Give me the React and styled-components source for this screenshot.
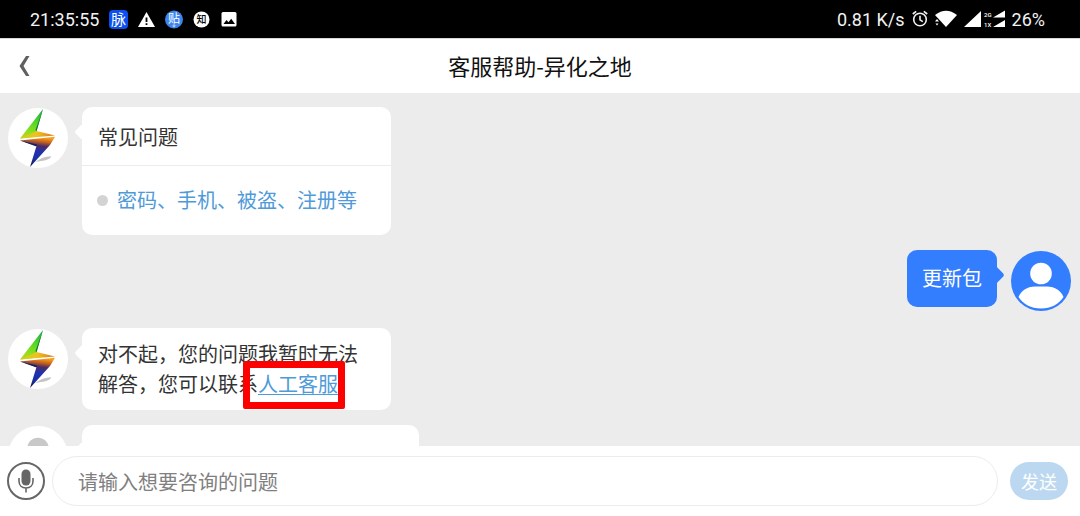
import React, { useState } from 'react'
import styled, { createGlobalStyle } from 'styled-components';

const GlobalStyle = createGlobalStyle`
  * {
    box-sizing: border-box;
  }
  body {
    margin: 0;
    font-family: "Noto Sans CJK SC", "Noto Sans", sans-serif;
    color: #333;
  }
`;
const Page = styled.div`
  display: flex;
  flex-direction: column;
  height: 100vh;
  background-color: #ececec;
`;
const StatusBar = styled.div`
  display: flex;
  justify-content: space-between;
  align-items: center;
  height: 38px;
  padding: 0 35px 0 30px;
  background-color: #000;
  color: #f2f2f2;
  font-family: Roboto, sans-serif;
  font-size: 18px;
`;
const StatusGroup = styled.div`
  display: flex;
  align-items: center;
  gap: ${(props) => props.$gap}px;

  svg {
    display: block;
    overflow: visible;
  }
`;
const Header = styled.header`
  display: grid;
  grid-template-columns: 50px 1fr 50px;
  align-items: center;
  height: 55px;
  background-color: #fff;
  border-top: 1px solid #d8d8d8;
`;
const BackButton = styled.button`
  display: flex;
  align-items: center;
  height: 54px;
  padding: 0 0 0 19px;
  border: none;
  background: none;
`;
const Title = styled.h1`
  margin: 0;
  padding-bottom: 2px;
  font-size: 22px;
  line-height: 52px;
  font-weight: 400;
  color: #111;
  text-align: center;
`;
const Chat = styled.main`
  flex: 1;
  min-height: 0;
  overflow: hidden;
  display: flex;
  flex-direction: column;
  gap: 15px;
  padding: 14px 9px 0 8px;
`;
const Message = styled.div`
  display: flex;
  flex-shrink: 0;
  flex-direction: ${(props) => (props.$mine ? 'row-reverse' : 'row')};
  align-items: flex-start;
  gap: 14px;
`;
const Avatar = styled.div`
  width: 60px;
  height: 60px;
  margin: 1px 0 2px;
  border-radius: 50%;
  background-color: ${(props) => (props.$mine ? '#337dff' : '#fff')};

  svg {
    display: block;
  }
`;
const Bubble = styled.div`
  position: relative;
  width: ${(props) => props.$width || 'auto'};
  min-height: 57px;
  border-radius: 10px;
  background-color: ${(props) => (props.$mine ? '#337dff' : '#fff')};
  color: ${(props) => (props.$mine ? '#fff' : '#333')};
  font-size: 20px;
  line-height: 30px;

  &::before {
    content: "";
    position: absolute;
    top: 18px;
    ${(props) => (props.$mine ? 'right' : 'left')}: -5px;
    width: 14px;
    height: 14px;
    border-radius: 3px;
    background-color: inherit;
    transform: rotate(45deg);
  }
`;
const BubbleText = styled.p`
  margin: 0;
  padding: ${(props) => (props.$mine ? '13px 15px 14px' : '11px 16px')};
`;
const BubbleTitle = styled.h2`
  margin: 0;
  padding: 15px 16px 13px;
  border-bottom: 1px solid #ececec;
  font-size: 20px;
  font-weight: 400;
`;
const TopicList = styled.ul`
  margin: 0;
  padding: 19px 15px 20px;
  list-style: none;
`;
const Topic = styled.li`
  display: flex;
  align-items: center;
  gap: 9px;

  &::before {
    content: "";
    width: 11px;
    height: 11px;
    border-radius: 50%;
    background-color: #d3d3d3;
  }
`;
const Link = styled.a`
  color: #4f9ad8;
  text-decoration: ${(props) => (props.$underline ? 'underline' : 'none')};
  text-decoration-thickness: 1px;
  text-underline-offset: 2px;
`;
const Marked = styled.span`
  position: relative;
  display: inline-block;

  &::after {
    content: "";
    position: absolute;
    inset: -8px -7px -10px -15px;
    border: 7px solid #fe0000;
    border-radius: 2px;
    pointer-events: none;
  }
`;
const Composer = styled.form`
  display: flex;
  align-items: center;
  padding: 10px 12px 10px 7px;
  background-color: #fff;
`;
const MicButton = styled.button`
  width: 38px;
  height: 38px;
  padding: 0;
  border: 2px solid #666;
  border-radius: 50%;
  background: none;

  svg {
    display: block;
  }
`;
const Input = styled.input`
  flex: 1;
  min-width: 0;
  height: 50px;
  margin: 0 12px 0 7px;
  padding: 0 25px;
  border: 1px solid #ececec;
  border-radius: 25px;
  outline: none;
  background-color: #fff;
  font-family: inherit;
  font-size: 20px;
  color: #333;

  &::placeholder {
    color: #808080;
  }
`;
const SendButton = styled.button`
  width: 58px;
  height: 38px;
  padding: 0;
  border: none;
  border-radius: 19px;
  background-color: #bcd8f1;
  color: #fff;
  font-family: inherit;
  font-size: 18px;
`;

const BoltIcon = () => (
    <svg width="60" height="60" viewBox="0 0 60 60" aria-hidden="true">
        <defs>
            <linearGradient id="boltTop" x1="0.7" y1="0" x2="0.4" y2="1">
                <stop offset="0" stopColor="#1fae4a" />
                <stop offset="0.4" stopColor="#4fd626" />
                <stop offset="0.8" stopColor="#8fe01c" />
                <stop offset="1" stopColor="#c9cc1c" />
            </linearGradient>
            <linearGradient id="boltEdge" x1="0" y1="0" x2="1" y2="0">
                <stop offset="0" stopColor="#b9dc1c" />
                <stop offset="0.5" stopColor="#f0c020" />
                <stop offset="1" stopColor="#d8741c" />
            </linearGradient>
            <linearGradient id="boltBottom" x1="0.5" y1="0" x2="0.35" y2="1">
                <stop offset="0" stopColor="#f5a01c" />
                <stop offset="0.14" stopColor="#c8621c" />
                <stop offset="0.28" stopColor="#4c2c62" />
                <stop offset="0.5" stopColor="#1c32b4" />
                <stop offset="0.75" stopColor="#1a2f9c" />
                <stop offset="1" stopColor="#0a1450" />
            </linearGradient>
        </defs>
        <path d="M27 54 L34 50 Q44 47 43 49 Q41 52 33 53 Z" fill="#c4c4c4" />
        <path d="M35 1 L12 30.500 L30 28.500 L28.500 23 Z" fill="url(#boltTop)" />
        <path d="M35 1 L28.500 23.500 L27.500 22 Z" fill="#12752c" />
        <path d="M12 30.500 L26 24 L28.500 23 L47 27.500 Z" fill="url(#boltEdge)" />
        <path d="M12 32.500 L47 28.800 L42 37 L22 59 L28.500 38 Z" fill="url(#boltBottom)" />
        <path d="M12 32.500 L29 36.500 L28.500 38.500 Z" fill="#15205f" />
    </svg>
)

const PersonIcon = ({ color }) => (
    <svg width="60" height="60" viewBox="0 0 60 60" aria-hidden="true" fill={color}>
        <circle cx="30" cy="22.500" r="10.800" />
        <path d="M24 35.500 H36 C44 35.500 50 40 52.500 46 C48 53 40 57.500 30 57.500 C20 57.500 12 53 7.500 46 C10 40 16 35.500 24 35.500 Z" />
    </svg>
)

const iconFont = '"Noto Sans CJK SC", sans-serif';

const StatusLeft = () => (
    <StatusGroup $gap={10}>
        <span>21:35:55</span>
        <svg width="19" height="19" viewBox="0 0 19 19">
            <rect width="19" height="19" rx="4" fill="#0b50ee" />
            <text x="9.500" y="15" textAnchor="middle" fontFamily={iconFont} fontSize="15" fill="#fff">脉</text>
        </svg>
        <svg width="17" height="19" viewBox="0 0 17 19">
            <path d="M8.500 2 L17 17 H0 Z" fill="#fff" />
            <path d="M7.600 7.500 h1.800 v4.500 h-1.800 Z M7.600 13.200 h1.800 v1.900 h-1.800 Z" fill="#000" />
        </svg>
        <svg width="18" height="19" viewBox="0 0 18 19">
            <circle cx="9" cy="9.500" r="9" fill="#3e86ee" />
            <text x="9" y="12.500" textAnchor="middle" fontFamily={iconFont} fontSize="12" fill="#fff">贴</text>
            <circle cx="9" cy="15.800" r="1" fill="none" stroke="#fff" strokeWidth="0.700" />
        </svg>
        <svg width="17" height="19" viewBox="0 0 17 19">
            <circle cx="8.500" cy="9.500" r="8" fill="#fff" />
            <text x="8.500" y="13" textAnchor="middle" fontFamily={iconFont} fontSize="10" fontWeight="500" fill="#000">知</text>
        </svg>
        <svg width="17" height="19" viewBox="0 0 17 19">
            <rect x="1.500" y="2" width="15" height="14.500" rx="1.500" fill="#fff" />
            <path d="M3.500 14 L6.500 10 L8.500 12.300 L11.200 8.800 L15 14 Z" fill="#000" />
        </svg>
    </StatusGroup>
)

const StatusRight = () => (
    <StatusGroup $gap={7}>
        <span>0.81 K/s</span>
        <svg width="16" height="18" viewBox="0 0 16 18" fill="none" stroke="#f2f2f2" strokeWidth="1.600">
            <circle cx="8" cy="9.500" r="6.300" />
            <path d="M8 5.800 V9.800 L10.800 11.600 M0.800 4 L4.200 1.300 M15.200 4 L11.800 1.300" />
        </svg>
        <svg width="22" height="18" viewBox="0 0 22 18" fill="#fff">
            <path d="M0 5 Q11 -3.500 22 5 L11 17 Z" />
            <path d="M0 11.500 L2 9 L4 11.500 Z M0.500 13.500 H3.500 L2 15.500 Z" />
        </svg>
        <StatusGroup $gap={3}>
            <svg width="17" height="18" viewBox="0 0 17 18">
                <path d="M17 1 V17 H0 Z" fill="#fff" />
            </svg>
            <svg width="21" height="18" viewBox="0 0 21 18" fill="#fff">
                <text x="0" y="7" fontFamily="Roboto, sans-serif" fontSize="6" fontWeight="500">2G</text>
                <text x="0" y="17" fontFamily="Roboto, sans-serif" fontSize="6" fontWeight="500">1X</text>
                <path d="M21 0.500 V7.500 H9 Z M21 10 V17 H9 Z" />
            </svg>
        </StatusGroup>
        <span>26%</span>
    </StatusGroup>
)

const App = () => {
    const [question, setQuestion] = useState('');

    return (
        <Page>
            <GlobalStyle />
            <StatusBar>
                <StatusLeft />
                <StatusRight />
            </StatusBar>
            <Header>
                <BackButton type="button" aria-label="返回">
                    <svg width="11" height="20" viewBox="0 0 11 20" fill="#606060">
                        <path d="M7 0 H10.500 L4.500 10 L10.500 20 H7 L0.500 10 Z" />
                    </svg>
                </BackButton>
                <Title>客服帮助-异化之地</Title>
            </Header>
            <Chat>
                <Message>
                    <Avatar><BoltIcon /></Avatar>
                    <Bubble $width="309px">
                        <BubbleTitle>常见问题</BubbleTitle>
                        <TopicList>
                            <Topic><Link href="#account">密码、手机、被盗、注册等</Link></Topic>
                        </TopicList>
                    </Bubble>
                </Message>
                <Message $mine>
                    <Avatar $mine><PersonIcon color="#fff" /></Avatar>
                    <Bubble $mine>
                        <BubbleText $mine>更新包</BubbleText>
                    </Bubble>
                </Message>
                <Message>
                    <Avatar><BoltIcon /></Avatar>
                    <Bubble $width="309px">
                        <BubbleText>
                            对不起，您的问题我暂时无法解答，您可以联系
                            <Marked><Link href="#service" $underline>人工客服</Link></Marked>
                        </BubbleText>
                    </Bubble>
                </Message>
                <Message>
                    <Avatar><PersonIcon color="#c8c8c8" /></Avatar>
                    <Bubble $width="337px" />
                </Message>
            </Chat>
            <Composer onSubmit={(e) => e.preventDefault()}>
                <MicButton type="button" aria-label="语音输入">
                    <svg width="34" height="34" viewBox="0 0 34 34">
                        <rect x="12.500" y="5.500" width="9" height="16" rx="4.500" fill="#666" />
                        <path d="M10 14 V17 C10 21.500 13 24 17 24 C21 24 24 21.500 24 17 V14 M17 24 V28.500" fill="none" stroke="#666" strokeWidth="1.600" />
                    </svg>
                </MicButton>
                <Input
                    type="text"
                    aria-label="问题"
                    placeholder="请输入想要咨询的问题"
                    value={question}
                    onChange={(e) => setQuestion(e.target.value)}
                />
                <SendButton type="submit">发送</SendButton>
            </Composer>
        </Page>
    )
}

export default App
